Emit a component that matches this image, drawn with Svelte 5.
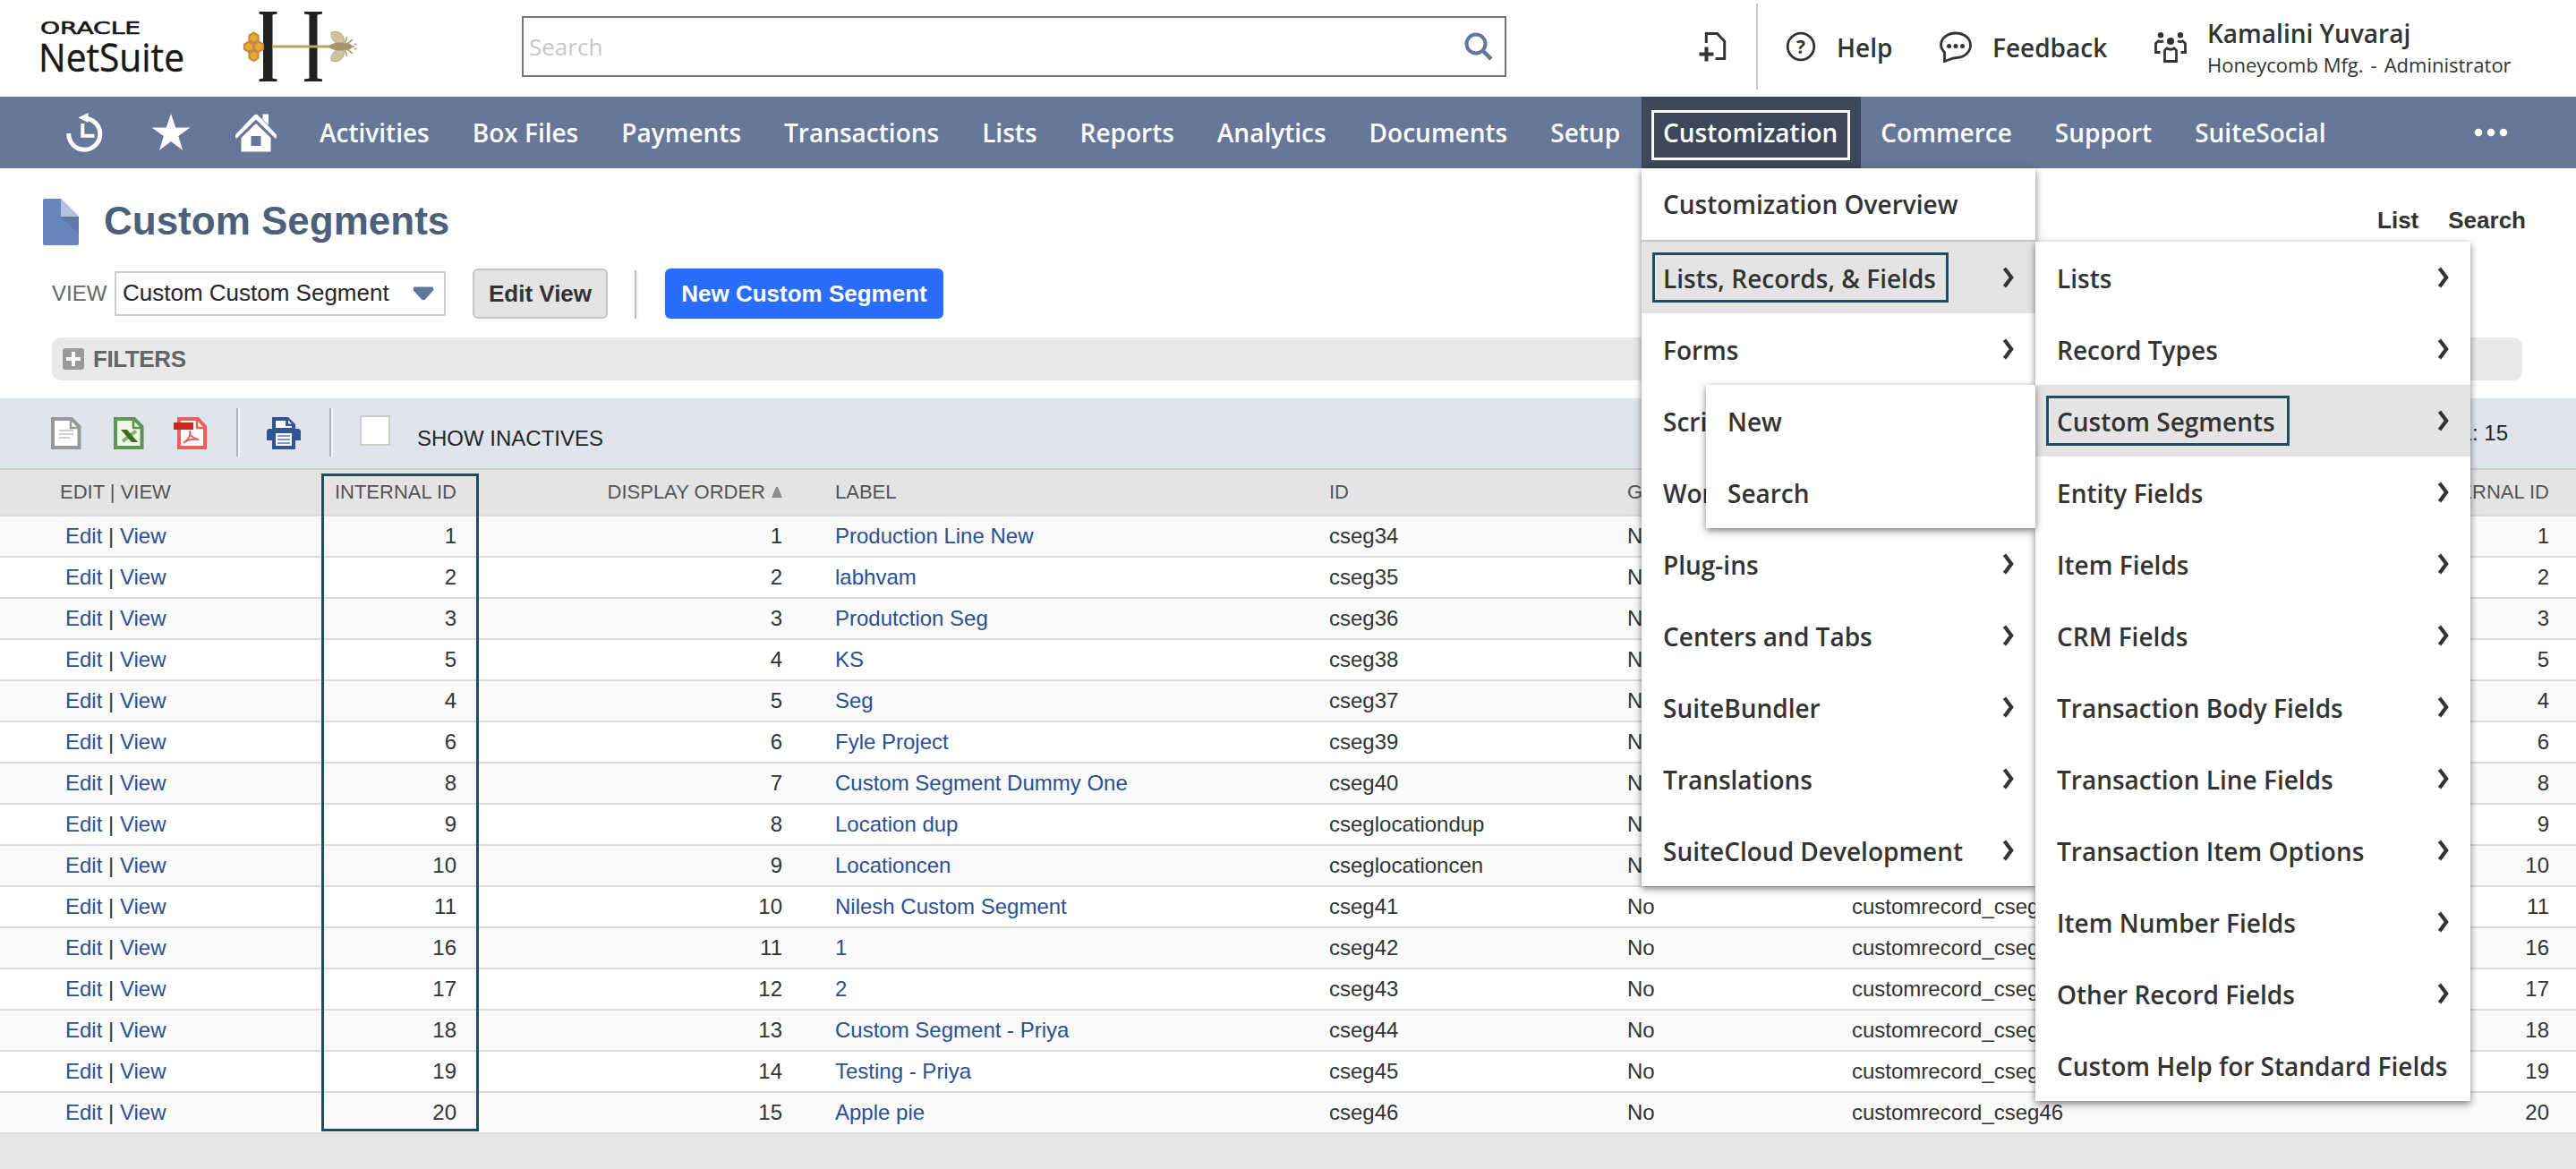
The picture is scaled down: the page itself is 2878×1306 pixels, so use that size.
<script>
  const navItems = [
    'Activities', 'Box Files', 'Payments', 'Transactions', 'Lists', 'Reports', 'Analytics',
    'Documents', 'Setup', 'Customization', 'Commerce', 'Support', 'SuiteSocial'
  ];

  const customizationMenu = [
    'Lists, Records, & Fields', 'Forms', 'Scripting', 'Workflow', 'Plug-ins',
    'Centers and Tabs', 'SuiteBundler', 'Translations', 'SuiteCloud Development'
  ];

  const fieldsMenu = [
    'Lists', 'Record Types', 'Custom Segments', 'Entity Fields', 'Item Fields', 'CRM Fields',
    'Transaction Body Fields', 'Transaction Line Fields', 'Transaction Item Options',
    'Item Number Fields', 'Other Record Fields', 'Custom Help for Standard Fields'
  ];

  const rows = [
    [1, 'Production Line New', 'cseg34'],
    [2, 'labhvam', 'cseg35'],
    [3, 'Produtction Seg', 'cseg36'],
    [5, 'KS', 'cseg38'],
    [4, 'Seg', 'cseg37'],
    [6, 'Fyle Project', 'cseg39'],
    [8, 'Custom Segment Dummy One', 'cseg40'],
    [9, 'Location dup', 'cseglocationdup'],
    [10, 'Locationcen', 'cseglocationcen'],
    [11, 'Nilesh Custom Segment', 'cseg41'],
    [16, '1', 'cseg42'],
    [17, '2', 'cseg43'],
    [18, 'Custom Segment - Priya', 'cseg44'],
    [19, 'Testing - Priya', 'cseg45'],
    [20, 'Apple pie', 'cseg46']
  ];
</script>

{#snippet chevron()}
  <svg class="chev" width="14" height="24" viewBox="0 0 14 24"><path d="M2.500 1.800 L10.200 12 L2.500 22.200" fill="none" stroke="#333" stroke-width="4.200" /></svg>
{/snippet}

<div class="page">
  <header class="top">
    <svg class="brand" width="400" height="108" viewBox="0 0 400 108">
      <text x="45" y="38" class="oracle" textLength="112" lengthAdjust="spacingAndGlyphs">ORACLE</text>
      <text x="43" y="79.500" class="netsuite" textLength="163" lengthAdjust="spacingAndGlyphs">NetSuite</text>
      <g fill="#211f20">
        <path d="M289.500 13h20v2.500l-5 1v71l5 1v2.500h-20v-2.500l4.500-1v-71l-4.500-1z" />
        <path d="M340 13h20v2.500l-5.500 1v71l5.500 1v2.500h-20v-2.500l5.500-1v-71l-5.500-1z" />
      </g>
      <path d="M304 52h66" stroke="#b9a365" stroke-width="3" />
      <g fill="#e9ab2c" stroke="#c58b45" stroke-width="2.200">
        <path d="M283.500 36.500l5 3v5.500l-5 3-5-3v-5.500z" />
        <path d="M278 46.500l5 3v5.500l-5 3-5-3v-5.500z" />
        <path d="M289 46.500l5 3v5.500l-5 3-5-3v-5.500z" />
        <path d="M283.500 56.500l5 3v5.500l-5 3-5-3v-5.500z" />
      </g>
      <g fill="#cdc29d" stroke="#b5a97e" stroke-width="1">
        <path d="M380 50c-8-3-11-8-9.500-14 6-2 12 1 13.500 6 1 4 0 7-4 8z" />
        <path d="M380 54c-8 3-11 8-9.500 14 6 2 12-1 13.500-6 1-4 0-7-4-8z" />
      </g>
      <ellipse cx="381" cy="52" rx="13" ry="4.500" fill="#a3946a" />
      <path d="M385 49l3-8M388 49l6-5M385 55l3 8M388 55l6 5M392 52h4M396 49.500h2.500M396 54.500h2.500" stroke="#b5a880" stroke-width="1.800" />
    </svg>

    <div class="searchbox">
      <span>Search</span>
      <svg width="34" height="34" viewBox="0 0 34 34"><circle cx="14" cy="14" r="10.500" fill="none" stroke="#607799" stroke-width="4" /><path d="M21.500 21.500L31 31" stroke="#607799" stroke-width="4.500" /></svg>
    </div>

    <div class="tools">
      <svg class="i-new" width="32" height="34" viewBox="0 0 32 34"><path d="M8.300 12V1.500H20.500L28.700 10V29.500H18.500" fill="none" stroke="#333" stroke-width="3" /><path d="M8.500 16.500v16M.5 24.500h16" stroke="#333" stroke-width="4" /></svg>
      <span class="vline"></span>
      <svg class="i-help" width="34" height="34" viewBox="0 0 34 34"><circle cx="17" cy="17" r="14.800" fill="none" stroke="#333" stroke-width="2.800" /><text x="17" y="24.500" class="qmark">?</text></svg>
      <span class="tool help">Help</span>
      <svg class="i-feed" width="38" height="36" viewBox="0 0 38 36"><path d="M6.500 33.500V23.500C3.800 20.500 2.500 17.500 2.500 15.500C2.500 8 9.500 2 19 2S35.500 8 35.500 15.500S28.500 29.500 20 29.500C15 29.500 12 31.500 6.500 33.500Z" fill="none" stroke="#333" stroke-width="2.800" /><circle cx="11.500" cy="16.500" r="2.500" fill="#333" /><circle cx="19" cy="16.500" r="2.500" fill="#333" /><circle cx="26.500" cy="16.500" r="2.500" fill="#333" /></svg>
      <span class="tool feed">Feedback</span>
      <svg class="i-role" width="36" height="35" viewBox="0 0 36 35"><g fill="#333"><circle cx="7" cy="3.300" r="3.200" /><circle cx="29" cy="3.300" r="3.200" /><circle cx="18" cy="10" r="4" /></g><g fill="none" stroke="#333" stroke-width="2.800"><path d="M10 9.800c-2 1.200-4 1-5.500 0L1.500 12.500V22.500H6.500" /><path d="M26 9.800c2 1.200 4 1 5.500 0l3 2.700V22.500H29.500" /><path d="M14 17.800c2.500 1.800 5.500 1.800 8 0l2.500 2.500V32.500H11.500V20.300z" /></g></svg>
      <div class="user"><b>Kamalini Yuvaraj</b><span>Honeycomb Mfg.<i>-</i>Administrator</span></div>
    </div>
  </header>

  <nav class="nav">
    <svg class="n1" width="42" height="44" viewBox="0 0 42 44"><path d="M2.800 23A17.500 17.500 0 1 0 20 6.200" fill="none" stroke="#fff" stroke-width="5" /><path d="M24.500 0L13.500 5.500L24.500 11z" fill="#fff" /><path d="M18.300 12v13.700H31.500" fill="none" stroke="#fff" stroke-width="4" /></svg>
    <svg class="n2" width="44" height="42" viewBox="0 0 44 42"><path d="M22 0L27.300 15.500H43.500L30.300 25L35.200 41L22 31L9 41L13.800 25L.5 15.500H16.700z" fill="#fff" /></svg>
    <svg class="n3" width="46" height="43" viewBox="0 0 46 43"><path d="M30.500 .5H37V13L30.500 6.500z" fill="#fff" /><path d="M0 23.500L20.500 2Q23 -.5 25.500 2L46 23.500V27L44.500 27.500L23 6.500L1.500 27.500L0 27z" fill="#fff" /><path d="M23 11L39.500 27V42.500H6.500V27z" fill="#fff" /><rect x="17.500" y="25" width="11" height="11" fill="#667797" /></svg>
    {#each navItems as item}
      <a class="navitem" class:active={item === 'Customization'}><span>{item}</span></a>
    {/each}
    <svg class="dots" width="38" height="10" viewBox="0 0 38 10"><circle cx="5" cy="5" r="4.300" fill="#fff" /><circle cx="19" cy="5" r="4.300" fill="#fff" /><circle cx="33" cy="5" r="4.300" fill="#fff" /></svg>

    <div class="menu menu-main">
      <div class="mi overview"><span>Customization Overview</span></div>
      {#each customizationMenu as item, i}
        <div class="mi" class:on={i === 0}><span>{item}</span>{@render chevron()}</div>
      {/each}
    </div>
    <div class="menu menu-fields">
      {#each fieldsMenu as item, i}
        <div class="mi" class:on={i === 2}><span>{item}</span>{#if i < 11}{@render chevron()}{/if}</div>
      {/each}
    </div>
    <div class="menu menu-segments">
      <div class="mi"><span>New</span></div>
      <div class="mi"><span>Search</span></div>
    </div>
  </nav>

  <div class="titlebar">
    <svg width="40" height="52" viewBox="0 0 40 52"><path d="M2 0H20L40 20V50a2 2 0 0 1-2 2H2a2 2 0 0 1-2-2V2a2 2 0 0 1 2-2z" fill="#6985bd" /><path d="M20 20H40V40z" fill="#6078a9" /><path d="M20 0L40 20H20z" fill="#b3c1de" /></svg>
    <h1>Custom Segments</h1>
    <div class="quick"><a>List</a><a>Search</a></div>
  </div>

  <div class="viewbar">
    <span class="viewlabel">VIEW</span>
    <div class="select"><span>Custom Custom Segment</span><svg width="24" height="16" viewBox="0 0 24 16"><path d="M1.500 0.500H22.500L23.500 4L14 14.500Q12 16 10 14.500L.5 4z" fill="#607799" /></svg></div>
    <button class="btn">Edit View</button>
    <span class="sep"></span>
    <button class="btn primary">New Custom Segment</button>
  </div>

  <div class="filters">
    <svg width="24" height="24" viewBox="0 0 24 24"><rect width="24" height="24" rx="3" fill="#999" /><path d="M12 4v16M4 12h16" stroke="#fff" stroke-width="4" /></svg>
    <span>FILTERS</span>
  </div>

  <div class="toolbar">
    <svg class="t1" width="34" height="36" viewBox="0 0 34 36"><path d="M2 2H23L31.500 10.500V34H2z" fill="#fff" stroke="#999" stroke-width="4" /><path d="M22 2V12H32" fill="none" stroke="#999" stroke-width="2.500" /><path d="M9 15h16M9 19h16M9 23h12" stroke="#ccc" stroke-width="2" /></svg>
    <svg class="t2" width="34" height="36" viewBox="0 0 34 36"><path d="M2 2H23L31.500 10.500V34H2z" fill="#eef6e6" stroke="#609452" stroke-width="4" /><path d="M22 2V12H32" fill="none" stroke="#609452" stroke-width="2.500" /><path d="M25 15.500L10 27" stroke="#7fb56f" stroke-width="4" /><path d="M8 14h7l12 14h-7z" fill="#3d6b1f" /></svg>
    <svg class="t3" width="38" height="36" viewBox="0 0 38 36"><path d="M6 2H27L35 10.500V34H6z" fill="#fff" stroke="#ec5f59" stroke-width="4" /><path d="M26 2V12H36" fill="none" stroke="#ec5f59" stroke-width="2.500" /><path d="M0 6h22v8H0z" fill="#c92a20" /><path d="M18 15c2 5 0 9-7 14M19 20c2 3 4 4 9 5M11 29c4-4 9-5 17-4" fill="none" stroke="#ec5f59" stroke-width="2" /></svg>
    <span class="sep s1"></span>
    <svg class="t4" width="38" height="36" viewBox="0 0 38 36"><path d="M6 0H24L32 8V13H36L38 15V26H32V36H6V26H0V15L2 13H6z" fill="#325596" /><path d="M10 4H21V10H28V12H10zM10 18H28V32H10z" fill="#fff" /><path d="M24 3.500L28 7.500H24z" fill="#fff" /><path d="M12 21h14M12 25h14M12 29h14" stroke="#7d98cc" stroke-width="2" /></svg>
    <span class="sep s2"></span>
    <span class="check"></span>
    <span class="inact">SHOW INACTIVES</span>
    <span class="total">TOTAL: 15</span>
  </div>

  <div class="table">
    <div class="row head">
      <span class="ev">EDIT | VIEW</span><span class="num">INTERNAL ID</span>
      <span class="num order">DISPLAY ORDER<svg width="12" height="12" viewBox="0 0 12 12"><path d="M5 0h2l5 12H0z" fill="#8c8c8c" /></svg></span>
      <span class="lab">LABEL</span><span>ID</span><span>GL IMPACT</span><span>RECORD TYPE</span><span class="num last">INTERNAL ID</span>
    </div>
    {#each rows as [id, label, seg], i}
      <div class="row" class:odd={i % 2 === 0}>
        <span class="links"><a>Edit</a> | <a>View</a></span><span class="num">{id}</span>
        <span class="num order">{i + 1}</span>
        <span class="lab"><a>{label}</a></span><span>{seg}</span><span>No</span><span>customrecord_{seg}</span><span class="num last">{id}</span>
      </div>
    {/each}
    <div class="highlight"></div>
  </div>
</div>

<style>
  :global(body) { margin: 0; background: #e6e6e6; }
  .page {
    position: relative; width: 2878px; height: 1306px; overflow: hidden;
    background: linear-gradient(#fff 0 445px, #e6e6e6 445px); color: #333;
    font-family: 'Liberation Sans', Arial, sans-serif; font-size: 24px;
  }
  .page *, .page { box-sizing: border-box; }
  svg { display: block; flex: none; }
  span, a, b, h1 { white-space: nowrap; }

  .top { display: flex; height: 108px; background: #fff; font-family: 'Open Sans', sans-serif; }
  .oracle { font: 20px 'DejaVu Sans', sans-serif; fill: #1a1816; stroke: #1a1816; stroke-width: .6px; }
  .netsuite { font: 44px 'Open Sans', sans-serif; fill: #1a1816; stroke: #1a1816; stroke-width: .4px; }
  .searchbox {
    display: flex; align-items: center; justify-content: space-between;
    width: 1100px; height: 68px; margin: 18px 0 0 183px; padding: 0 12px 0 6px;
    border: 2px solid #757575; color: #c7c7c7; font-size: 26px;
  }
  .tools { display: flex; align-items: flex-start; margin-left: 215px; }
  .tool { font-size: 28px; font-weight: 600; line-height: 38px; padding-top: 34px; }
  .i-new { margin-top: 36px; }
  .vline { width: 2px; height: 96px; margin: 4px 0 0 32px; background: #c7c7c7; }
  .i-help { margin: 35px 0 0 31px; }
  .qmark { font: bold 21px 'Open Sans', sans-serif; fill: #333; text-anchor: middle; }
  .help { width: 114px; margin-left: 23px; }
  .i-feed { margin-top: 35px; }
  .feed { width: 181px; margin-left: 22px; }
  .i-role { margin-top: 36px; }
  .user { display: flex; flex-direction: column; margin: 18px 0 0 23px; }
  .user b { font-size: 28px; font-weight: 600; line-height: 38px; }
  .user span { font-size: 22px; line-height: 32px; }
  .user i { font-style: normal; margin: 0 8px; }

  .nav {
    position: relative; z-index: 5; display: flex; align-items: center; height: 80px;
    background: #667797; font: 600 28px/38px 'Open Sans', sans-serif;
  }
  .n1 { margin-left: 74px; }
  .n2 { margin-left: 53px; }
  .n3 { margin: 0 24px 0 50px; }
  .navitem { height: 80px; margin-right: -2px; padding: 15px 12px 0 11px; color: #fff; }
  .navitem span { display: block; height: 56px; padding: 6px 14px 0 13px; }
  .navitem.active { background: #3c4759; }
  .navitem.active span { padding: 3px 11px 0 10px; border: 3px solid #fff; }
  .dots { margin: 0 76px 0 auto; }

  .menu { position: absolute; background: #fff; box-shadow: 0 3px 8px rgba(0, 0, 0, .5); }
  .menu-main { left: 1834px; top: 80px; width: 440px; }
  .menu-fields { left: 2274px; top: 162px; width: 486px; }
  .menu-segments { left: 1906px; top: 322px; width: 368px; }
  .mi { display: flex; align-items: center; justify-content: space-between; height: 80px; padding: 0 23px 0 12px; }
  .mi span { display: block; height: 56px; padding: 10px 10px 0 12px; line-height: 38px; }
  .overview { height: 82px; padding-bottom: 2px; border-bottom: 2px solid #c5c5c5; }
  .mi.on { background: #e4e4e4; }
  .mi.on span { padding: 7px 11px 0 9px; border: 3px solid #1f4e63; }
  .menu-fields .mi.on span { padding-right: 13px; }

  .titlebar { display: flex; align-items: flex-start; height: 112px; padding: 34px 56px 0 48px; background: #fff; }
  h1 { margin: 0 0 0 28px; font-size: 44px; line-height: 50px; color: #4d5f79; }
  .quick { display: flex; gap: 33px; margin: 9px 0 0 auto; font-size: 26px; font-weight: bold; line-height: 30px; }

  .viewbar { display: flex; align-items: flex-start; height: 77px; padding-left: 58px; background: #fff; }
  .viewlabel { width: 70px; padding-top: 14px; line-height: 28px; color: #666; }
  .select {
    display: flex; align-items: center; justify-content: space-between; width: 370px; height: 50px;
    margin: 3px 30px 0 0; padding: 0 11px 1px 7px; border: 2px solid #ccc; font-size: 26px; color: #262626;
  }
  .btn {
    height: 56px; width: 151px; padding: 1px 0 0; border: 2px solid #c6c6c6; border-radius: 6px;
    background: #e4e4e4; color: #333; font: bold 26px 'Liberation Sans', sans-serif;
  }
  .primary { width: 311px; border: 0; background: #2a6cfb; color: #fff; }
  .sep { width: 4px; height: 54px; border: solid #b0b4ba; border-width: 0 0 0 2px; background: #f6f7fa; }
  .viewbar .sep { margin: 2px 30px 0; border-color: #bbb; }

  .filters {
    display: flex; align-items: center; gap: 10px; height: 48px; margin: 0 60px 0 58px; padding-left: 12px;
    border-radius: 10px; background: #e9e9e9; font-size: 26px; font-weight: bold; letter-spacing: -.4px; color: #666;
  }
  .filters span { padding-top: 1px; }

  .toolbar { display: flex; align-items: flex-start; height: 78px; margin-top: 20px; padding: 21px 0 0 57px; background: #e0e4ed; }
  .t2 { margin-left: 36px; }
  .t3 { margin-left: 33px; }
  .s1, .s2 { margin: -10px 30px 0 32px; }
  .check { width: 34px; height: 34px; margin: -2px 30px 0 0; border: 2px solid #ccc; background: #fff; }
  .inact { margin-top: 10px; line-height: 28px; color: #262626; }
  .total { margin: 4px 76px 0 auto; line-height: 28px; color: #262626; }

  .table { position: relative; }
  .row {
    display: grid; grid-template-columns: 359px 151px 364px 611px 333px 251px 549px 230px;
    height: 46px; padding-top: 8px; line-height: 28px; background: #fff; border-bottom: 2px solid #dcdcdc;
  }
  .odd { background: #fafafa; }
  .row a { color: #2c4f91; }
  .row > span { height: 28px; }
  .num { text-align: right; }
  .links { padding-left: 73px; }
  .lab { padding-left: 59px; }
  .head {
    height: 54px; padding-top: 11px; font-size: 22px; color: #555; background: #e4e4e4; border-top: 2px solid #ccc;
  }
  .ev { padding-left: 67px; }
  .order { display: flex; justify-content: flex-end; align-items: center; gap: 7px; }
  .highlight { position: absolute; left: 359px; top: 6px; width: 176px; height: 735px; border: 3px solid #1f4e63; }
</style>
